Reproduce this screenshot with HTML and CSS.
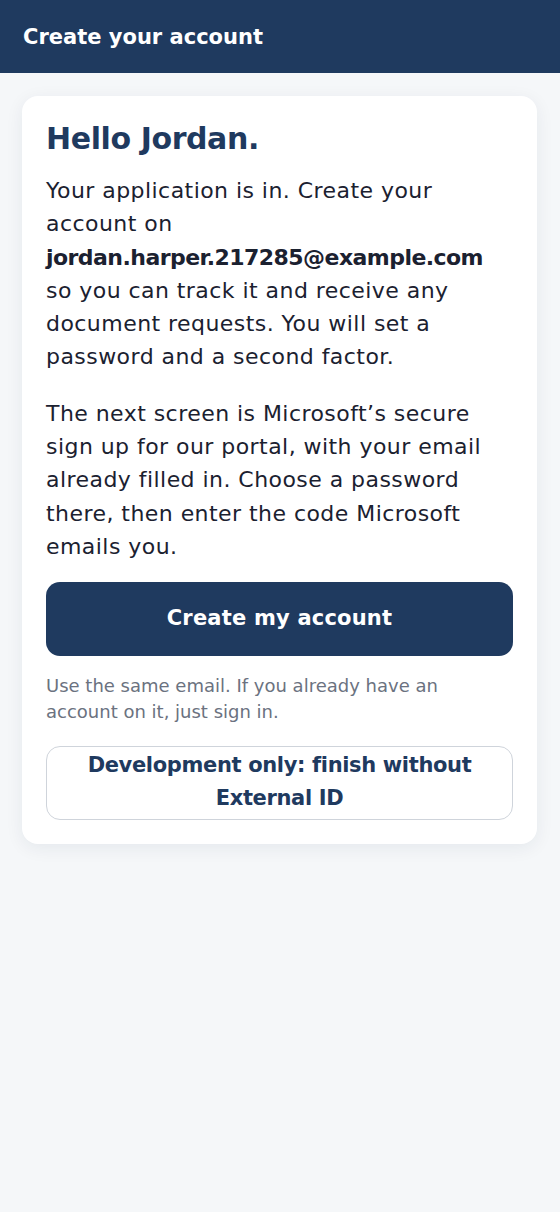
FILE: index.html
```html
<!DOCTYPE html>
<html lang="en">
<head>
<meta charset="utf-8">
<title>Create your account</title>
<link rel="stylesheet" href="styles.css">
</head>
<body>
<header class="topbar">
  <span class="topbar-title">Create your account</span>
</header>
<main class="page">
  <section class="card">
    <h1 class="card-title">Hello Jordan.</h1>
    <p class="card-text">Your application is in. Create your account on <strong class="email">jordan.harper.217285@example.com</strong> so you can track it and receive any document requests. You will set a password and a second factor.</p>
    <p class="card-text card-text-last">The next screen is Microsoft’s secure sign up for our portal, with your email already filled in. Choose a password there, then enter the code Microsoft emails you.</p>
    <button class="btn btn-primary" type="button">Create my account</button>
    <p class="hint">Use the same email. If you already have an account on it, just sign in.</p>
    <button class="btn btn-outline" type="button">Development only: finish without External ID</button>
  </section>
</main>
</body>
</html>
```
FILE: styles.css
```css
* { box-sizing: border-box; }
html, body { margin: 0; padding: 0; }
body {
  background: #f5f7f9;
  font-family: "DejaVu Sans", "Liberation Sans", sans-serif;
  color: #1b2130;
  min-height: 1212px;
}
.topbar {
  height: 73px;
  background: #1f3a5f;
  display: flex;
  align-items: center;
  padding: 0 23px;
}
.topbar-title {
  color: #ffffff;
  font-size: 21px;
  font-weight: 700;
  letter-spacing: 0;
}
.page {
  padding: 23px 23px 0 22px;
}
.card {
  background: #ffffff;
  border-radius: 16px;
  box-shadow: 0 4px 18px rgba(20, 40, 70, 0.07);
  padding: 24px;
  display: flex;
  flex-direction: column;
}
.card-title {
  margin: 0 0 16px;
  font-size: 30px;
  line-height: 38px;
  font-weight: 700;
  color: #1f3a5f;
  letter-spacing: -0.4px;
}
.card-text {
  margin: 0 0 23px;
  font-size: 22px;
  line-height: 33.3px;
  letter-spacing: 0.45px;
}
.card-text-last { margin-bottom: 19px; }
.email {
  font-weight: 700;
  letter-spacing: -0.55px;
}
.btn {
  font-family: inherit;
  width: 100%;
  cursor: pointer;
  border-radius: 14px;
  font-size: 21px;
  line-height: 33px;
  font-weight: 700;
}
.btn-primary {
  background: #1f3a5f;
  color: #ffffff;
  border: none;
  padding: 20px 16px 21px;
  letter-spacing: 0.2px;
}
.btn-outline {
  background: #ffffff;
  color: #1f3a5f;
  border: 1px solid #cfd4db;
  padding: 2px 16px 4px;
  letter-spacing: -0.35px;
}
.hint {
  margin: 17px 0 21px;
  font-size: 18px;
  line-height: 26px;
  letter-spacing: 0;
  color: #6b7280;
}
```
